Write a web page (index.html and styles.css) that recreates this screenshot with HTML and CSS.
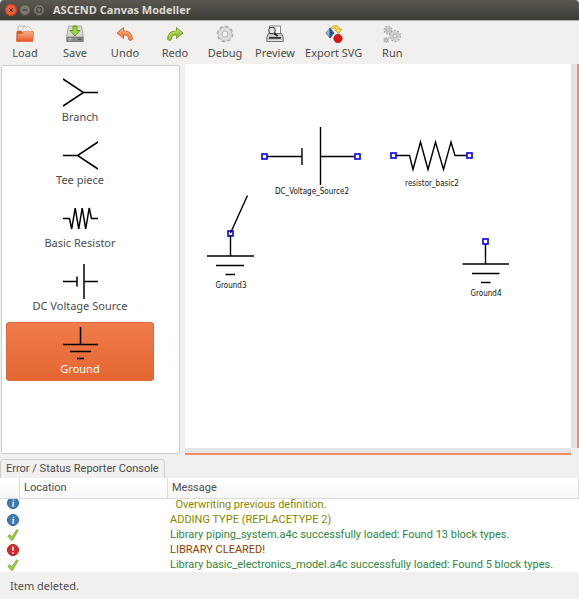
FILE: index.html
```
<!DOCTYPE html>
<html lang="en">
<head>
    <meta charset="UTF-8">
    <meta name="viewport" content="width=device-width, initial-scale=1.0">
    <title>ASCEND Canvas Modeller</title>
    <link rel="stylesheet" href="styles.css">
</head>
<body>
    <header class="titlebar">
        <button class="win-btn close" aria-label="Close">
            <svg viewBox="0 0 12 12"><path d="M4 4l4 4M8 4l-4 4"/></svg>
        </button>
        <button class="win-btn" aria-label="Minimize">
            <svg viewBox="0 0 12 12"><path d="M3.5 6h5"/></svg>
        </button>
        <button class="win-btn" aria-label="Maximize">
            <svg viewBox="0 0 12 12"><path d="M3.8 3.8h4.4v4.4H3.8z"/></svg>
        </button>
        <h1>ASCEND Canvas Modeller</h1>
    </header>

    <!-- Toolbar -->
    <nav class="toolbar">
        <button class="tool">
            <svg viewBox="0 0 18 18">
                <path d="M2 1h7l2 3v9H2z" fill="#f4f4f2" stroke="#aaa" stroke-width=".8"/>
                <path d="M7 2h6l3 3v9H7z" fill="#fff" stroke="#b5b5b0" stroke-width=".8"/>
                <path d="M9 4h4M9 5.500h5" stroke="#ccc" stroke-width=".7"/>
                <path d="M.8 15.500V7l1-1h3.700L6.500 8" fill="#d9551f" stroke="#c95a2a" stroke-width=".6"/>
                <path d="M.5 16.500L1.500 8.500h5l1-1.800h10l-.8 9.800z" fill="url(#folder)" stroke="#d4622d" stroke-width=".7"/>
                <defs>
                    <linearGradient id="folder" x1="0" y1="0" x2="0" y2="1">
                        <stop offset="0" stop-color="#f7b58c"/>
                        <stop offset="1" stop-color="#e8521b"/>
                    </linearGradient>
                </defs>
            </svg>
            <span>Load</span>
        </button>
        <button class="tool">
            <svg viewBox="0 0 18 18">
                <path d="M2.500 1h13l1.800 10.500v5H.7v-5z" fill="#d8d9d6" stroke="#999" stroke-width=".8"/>
                <path d="M1 12h16v4.500H1z" fill="#8a8c89" stroke="#666" stroke-width=".6"/>
                <path d="M2.500 13.500h3M2.500 15h3" stroke="#ddd" stroke-width=".7"/>
                <path d="M12 14.200h3.500" stroke="#444"/>
                <path d="M7 1h4v4.500h3L9 11 4 5.500h3z" fill="#9bd63c" stroke="#5f9a16" stroke-width=".9"/>
            </svg>
            <span>Save</span>
        </button>
        <button class="tool">
            <svg viewBox="0 0 18 18">
                <path d="M7.500 2.500v3.700c5.500-.4 9 2.300 8.800 8.300l-2 1c-1.500-.4-1.700-1-1.800-2.500-.2-2.300-2-3.200-5-3v3.500L1 8z" fill="#f28b50" stroke="#cf6126" stroke-width=".9" stroke-linejoin="round"/>
                <path d="M3 8l3.700-3.500v2.600c4-.2 6.500.8 7.800 3.400" fill="none" stroke="#f9bd98" stroke-width=".8"/>
            </svg>
            <span>Undo</span>
        </button>
        <button class="tool">
            <svg viewBox="0 0 18 18">
                <path d="M10.500 2.500v3.700C5 5.800 1.500 8.500 1.700 14.500l2 1c1.500-.4 1.700-1 1.800-2.500.2-2.300 2-3.200 5-3v3.500L17 8z" fill="#9cc63e" stroke="#6d9920" stroke-width=".9" stroke-linejoin="round"/>
                <path d="M15 8l-3.700-3.500v2.600c-4-.2-6.500.8-7.800 3.400" fill="none" stroke="#cbe58d" stroke-width=".8"/>
            </svg>
            <span>Redo</span>
        </button>
        <button class="tool">
            <svg viewBox="0 0 18 18" fill="none">
                <circle cx="9" cy="9" r="7.400" stroke="#aaa" stroke-width="2" stroke-dasharray="3.100 2.711"/>
                <circle cx="9" cy="9" r="5.200" stroke="#dcdcdc" stroke-width="3.500"/>
                <circle cx="9" cy="9" r="6.900" stroke="#b5b5b5" stroke-width=".7"/>
                <circle cx="9" cy="9" r="3" fill="#f1f0ee" stroke="#aaa" stroke-width=".9"/>
            </svg>
            <span>Debug</span>
        </button>
        <button class="tool">
            <svg viewBox="0 0 18 18">
                <path d="M3.500 1h11v9h-11z" fill="#fff" stroke="#777" stroke-width=".9"/>
                <path d="M2.500 8.500h13l1.700 3.500v4.500H.8V12z" fill="#c9cac8" stroke="#555" stroke-width=".8"/>
                <path d="M3 12h12v1.800H3z" fill="#333"/>
                <path d="M1.500 15.500h15" stroke="#eee" stroke-width=".8"/>
                <path d="M8 8l3.500 3" stroke="#222" stroke-width="1.800"/>
                <circle cx="6" cy="5.500" r="3.200" fill="#dfe4e8" stroke="#444" stroke-width="1.100"/>
            </svg>
            <span>Preview</span>
        </button>
        <button class="tool">
            <svg viewBox="0 0 18 18">
                <path d="M5 3L.8 8 5 13z" fill="#8cb2de" stroke="#3465a4" stroke-width=".6"/>
                <path d="M5 3l4 5-4 5z" fill="#264f87" stroke="#204a87" stroke-width=".6"/>
                <path d="M6 2.500C9-.4 14 0 14.800 4.300H17L13.300 8.500 9.700 4.800h2C11 2.800 9 2.600 7 4z" fill="#f3dc42" stroke="#b99a08" stroke-width=".7"/>
                <circle cx="13" cy="13.500" r="4.200" fill="#e01212" stroke="#a80000" stroke-width=".6"/>
            </svg>
            <span>Export SVG</span>
        </button>
        <button class="tool">
            <svg viewBox="0 0 18 18" fill="none">
                <circle cx="5" cy="5" r="3.700" stroke="#aaa" stroke-width="1.500" stroke-dasharray="1.500 1.406"/>
                <circle cx="5" cy="5" r="2.500" stroke="#c6c6c6" stroke-width="1.800"/>
                <circle cx="5" cy="5" r="1.300" stroke="#999" stroke-width=".7"/>
                <circle cx="12" cy="11" r="5.100" stroke="#a5a5a5" stroke-width="1.700" stroke-dasharray="1.800 1.404"/>
                <circle cx="12" cy="11" r="3.600" stroke="#cfcfcf" stroke-width="2.600"/>
                <circle cx="12" cy="11" r="1.900" stroke="#999" stroke-width=".8"/>
                <path d="M.8 12.800l5 4.400M5.800 12.800l-5 4.400M3.300 12v6M.5 15h5.600" stroke="#aaa" stroke-width="1.100"/>
                <circle cx="3.300" cy="15" r="1.200" fill="#eee" stroke="#999" stroke-width=".6"/>
            </svg>
            <span>Run</span>
        </button>
    </nav>

    <main class="workspace">
        <!-- Block palette -->
        <aside class="palette">
            <button class="block">
                <svg viewBox="0 0 35 35"><path d="M0 4l20.500 13.500L0 31M20.500 17.500H35"/></svg>
                <span>Branch</span>
            </button>
            <button class="block">
                <svg viewBox="0 0 35 35"><path d="M35 4L14.500 17.500 35 31M14.500 17.500H0"/></svg>
                <span>Tee piece</span>
            </button>
            <button class="block">
                <svg viewBox="0 0 35 35"><path d="M0 17.500h6.500L8.700 28l3.500-21 3.500 21 3.500-21 3.500 21 3.500-21 2.300 10.500H35"/></svg>
                <span>Basic Resistor</span>
            </button>
            <button class="block">
                <svg viewBox="0 0 35 35"><path d="M0 17.500h14M14 12.500v10M21 0v35M21 17.500h14"/></svg>
                <span>DC Voltage Source</span>
            </button>
            <button class="block selected">
                <svg viewBox="0 0 35 35"><path d="M17.500 0v17.500M0 17.500h35M7 24.500h21M14 31.500h7"/></svg>
                <span>Ground</span>
            </button>
        </aside>

        <!-- Drawing canvas with its scrollbars -->
        <section class="canvas-pane">
            <svg class="canvas">
                <g>
                    <path d="M79 92.500h38M117 84v17M135.500 63v58M135.500 92.500H173"/>
                    <rect x="77" y="90" width="5" height="5"/>
                    <rect x="170" y="90" width="5" height="5"/>
                    <text x="127" y="130">DC_Voltage_Source2</text>
                </g>
                <g>
                    <path d="M209 91.500h15.500l3.500 14 7.500-27.500 7.500 27.500 7.500-27.500 8 27.500 7.500-27.500 4 13.500h15"/>
                    <rect x="206" y="89" width="5" height="5"/>
                    <rect x="282" y="89" width="5" height="5"/>
                    <text x="247" y="122">resistor_basic2</text>
                </g>
                <g>
                    <rect x="43" y="167" width="5" height="5"/>
                    <path d="M45.500 169l17-37.500M45.500 171v21M22 192h47M31 201.500h28M40.500 210.500h9.500"/>
                    <text x="46" y="224">Ground3</text>
                </g>
                <g>
                    <path d="M300.500 179v21M277.500 200H324M287 209.500h27.500M296 218.500h9.500"/>
                    <rect x="298" y="175" width="5" height="5"/>
                    <text x="301" y="232">Ground4</text>
                </g>
            </svg>
            <div class="scroll-y"></div>
            <div class="scroll-x"></div>
        </section>
    </main>

    <!-- Console -->
    <section class="console">
        <button class="tab">Error / Status Reporter Console</button>
        <table class="log">
            <colgroup>
                <col class="col-icon">
                <col class="col-location">
                <col>
            </colgroup>
            <thead>
                <tr><th></th><th>Location</th><th>Message</th></tr>
            </thead>
            <tbody>
                <tr class="note cut">
                    <td><svg viewBox="0 2 12 10"><circle cx="6" cy="6" r="5.500" fill="#3c7ab8" stroke="#2a5f97"/><path d="M6.500 2.800v1.200M5 5.500h1.500L5.800 9H7.200" stroke="#fff" stroke-width="1.200" fill="none"/></svg></td>
                    <td></td>
                    <td>&nbsp; Overwriting previous definition.</td>
                </tr>
                <tr class="note">
                    <td><svg viewBox="0 0 12 12"><circle cx="6" cy="6" r="5.500" fill="#3c7ab8" stroke="#2a5f97"/><path d="M6.500 2.800v1.200M5 5.500h1.500L5.800 9H7.200" stroke="#fff" stroke-width="1.200" fill="none"/></svg></td>
                    <td></td>
                    <td>ADDING TYPE (REPLACETYPE 2)</td>
                </tr>
                <tr class="success">
                    <td><svg viewBox="0 0 12 12"><path d="M.8 7.200L2.800 5.500l2 2.300L9.800.8l1.400.6-5.600 9.800h-1.400z" fill="#9fd04a" stroke="#6a9f25" stroke-width=".7"/></svg></td>
                    <td></td>
                    <td>Library piping_system.a4c successfully loaded: Found 13 block types.</td>
                </tr>
                <tr class="error">
                    <td><svg viewBox="0 0 12 12"><circle cx="6" cy="6" r="5.500" fill="#d92b2b" stroke="#ad1d1d"/><path d="M6 2.500v4.500M6 8.300v1.500" stroke="#fff" stroke-width="1.500"/></svg></td>
                    <td></td>
                    <td>LIBRARY CLEARED!</td>
                </tr>
                <tr class="success">
                    <td><svg viewBox="0 0 12 12"><path d="M.8 7.200L2.800 5.500l2 2.300L9.800.8l1.400.6-5.600 9.800h-1.400z" fill="#9fd04a" stroke="#6a9f25" stroke-width=".7"/></svg></td>
                    <td></td>
                    <td>Library basic_electronics_model.a4c successfully loaded: Found 5 block types.</td>
                </tr>
            </tbody>
        </table>
    </section>

    <footer class="statusbar">Item deleted.</footer>
</body>
</html>
```
FILE: styles.css
```
* {
    box-sizing: border-box;
}
body {
    margin: 0;
    min-height: 100vh;
    display: flex;
    flex-direction: column;
    background-color: #f1f0ee;
    color: #4c4c4c;
    font-family: "Noto Sans", "Open Sans", sans-serif;
    font-size: 11px;
    line-height: 14px;
}
button {
    border: none;
    background: none;
    padding: 0;
    margin: 0;
    font: inherit;
    color: inherit;
}

/* Title bar */
.titlebar {
    height: 21px;
    flex: none;
    display: flex;
    align-items: center;
    gap: 2px;
    padding: 0 5px;
    background: linear-gradient(#5a5850, #3d3b36);
    border-bottom: 1px solid #b0afab;
    border-radius: 4px 4px 0 0;
}
.titlebar h1 {
    margin: 0 0 0 6px;
    font-family: "Open Sans", "Noto Sans", sans-serif;
    font-size: 11px;
    color: #dfdbd2;
}
.win-btn {
    width: 12px;
    height: 12px;
    border-radius: 50%;
    background-color: #7a786f;
    box-shadow: inset 0 0 0 1px #45433c;
}
.win-btn svg {
    display: block;
    fill: none;
    stroke: #33312c;
    stroke-width: 1;
}
.win-btn.close {
    background-color: #ee6038;
    box-shadow: inset 0 0 0 1px #b8401c;
}

/* Toolbar */
.toolbar {
    display: flex;
    flex: none;
    height: 43px;
}
.tool {
    min-width: 50px;
    padding: 4px 5px 0;
    display: flex;
    flex-direction: column;
    align-items: center;
    gap: 3px;
}
.tool svg {
    width: 18px;
    height: 18px;
}

/* Workspace */
.workspace {
    flex: 1;
    display: flex;
    gap: 5px;
    padding-left: 1px;
}
.palette {
    width: 179px;
    flex: none;
    display: flex;
    flex-direction: column;
    gap: 4px;
    margin: 1px 0;
    padding: 4px 25px 4px 4px;
    background-color: #fff;
    border: 1px solid #cfcdca;
    border-radius: 2px;
}
.block {
    height: 59px;
    padding: 5px 0;
    display: flex;
    flex-direction: column;
    align-items: center;
    border-radius: 4px;
}
.block svg {
    width: 35px;
    height: 35px;
    fill: none;
    stroke: #000;
    stroke-width: 1.5;
}
.block.selected {
    background: linear-gradient(#f07c4b, #e46631);
    box-shadow: inset 0 0 0 1px #e2693a;
    color: #fff;
}

.canvas-pane {
    flex: 1;
    display: grid;
    grid-template-columns: 1fr 8px;
    grid-template-rows: 1fr 7px;
}
.canvas {
    width: 100%;
    height: 100%;
    background-color: #fff;
}
.canvas path {
    fill: none;
    stroke: #000;
    stroke-width: 1.4;
}
.canvas rect {
    fill: #fff;
    stroke: #1010f0;
    stroke-width: 1.7;
}
.canvas text {
    font-family: "DejaVu Sans Condensed", "DejaVu Sans", sans-serif;
    font-size: 8px;
    text-anchor: middle;
    fill: #111;
}
.scroll-y,
.scroll-x {
    background-color: #e4e4e4;
}
.scroll-y {
    border-right: 2px solid #f58a66;
}
.scroll-x {
    border-bottom: 2px solid #f58a66;
}

/* Console */
.console {
    flex: none;
    margin-top: 4px;
    font-family: Roboto, "Noto Sans", sans-serif;
}
.tab {
    display: block;
    height: 19px;
    padding: 0 5px;
    border: 1px solid #cfcdca;
    border-bottom: none;
    border-radius: 4px 4px 0 0;
}
.log {
    width: 100%;
    table-layout: fixed;
    border-collapse: separate;
    border-spacing: 0;
    background-color: #fff;
}
.col-icon {
    width: 20px;
}
.col-location {
    width: 148px;
}
.log th {
    height: 21px;
    padding: 0 4px;
    text-align: left;
    font-weight: normal;
    background: linear-gradient(#fff, #f7f7f6);
    border-right: 1px solid #dddcda;
    border-bottom: 1px solid #dddcda;
}
.log td {
    height: 15px;
    padding: 0 2px;
    line-height: 15px;
    white-space: nowrap;
}
.log td:first-child {
    padding: 0 0 0 7px;
}
.log td svg {
    display: block;
    width: 12px;
    height: 12px;
}
.log .cut td {
    height: 13px;
    line-height: 11px;
    vertical-align: top;
}
.log .cut td svg {
    height: 10px;
}
.note {
    color: #888800;
}
.success {
    color: #2f8640;
}
.error {
    color: #914000;
}

/* Status bar */
.statusbar {
    flex: none;
    height: 27px;
    padding: 7px 10px;
}
```
